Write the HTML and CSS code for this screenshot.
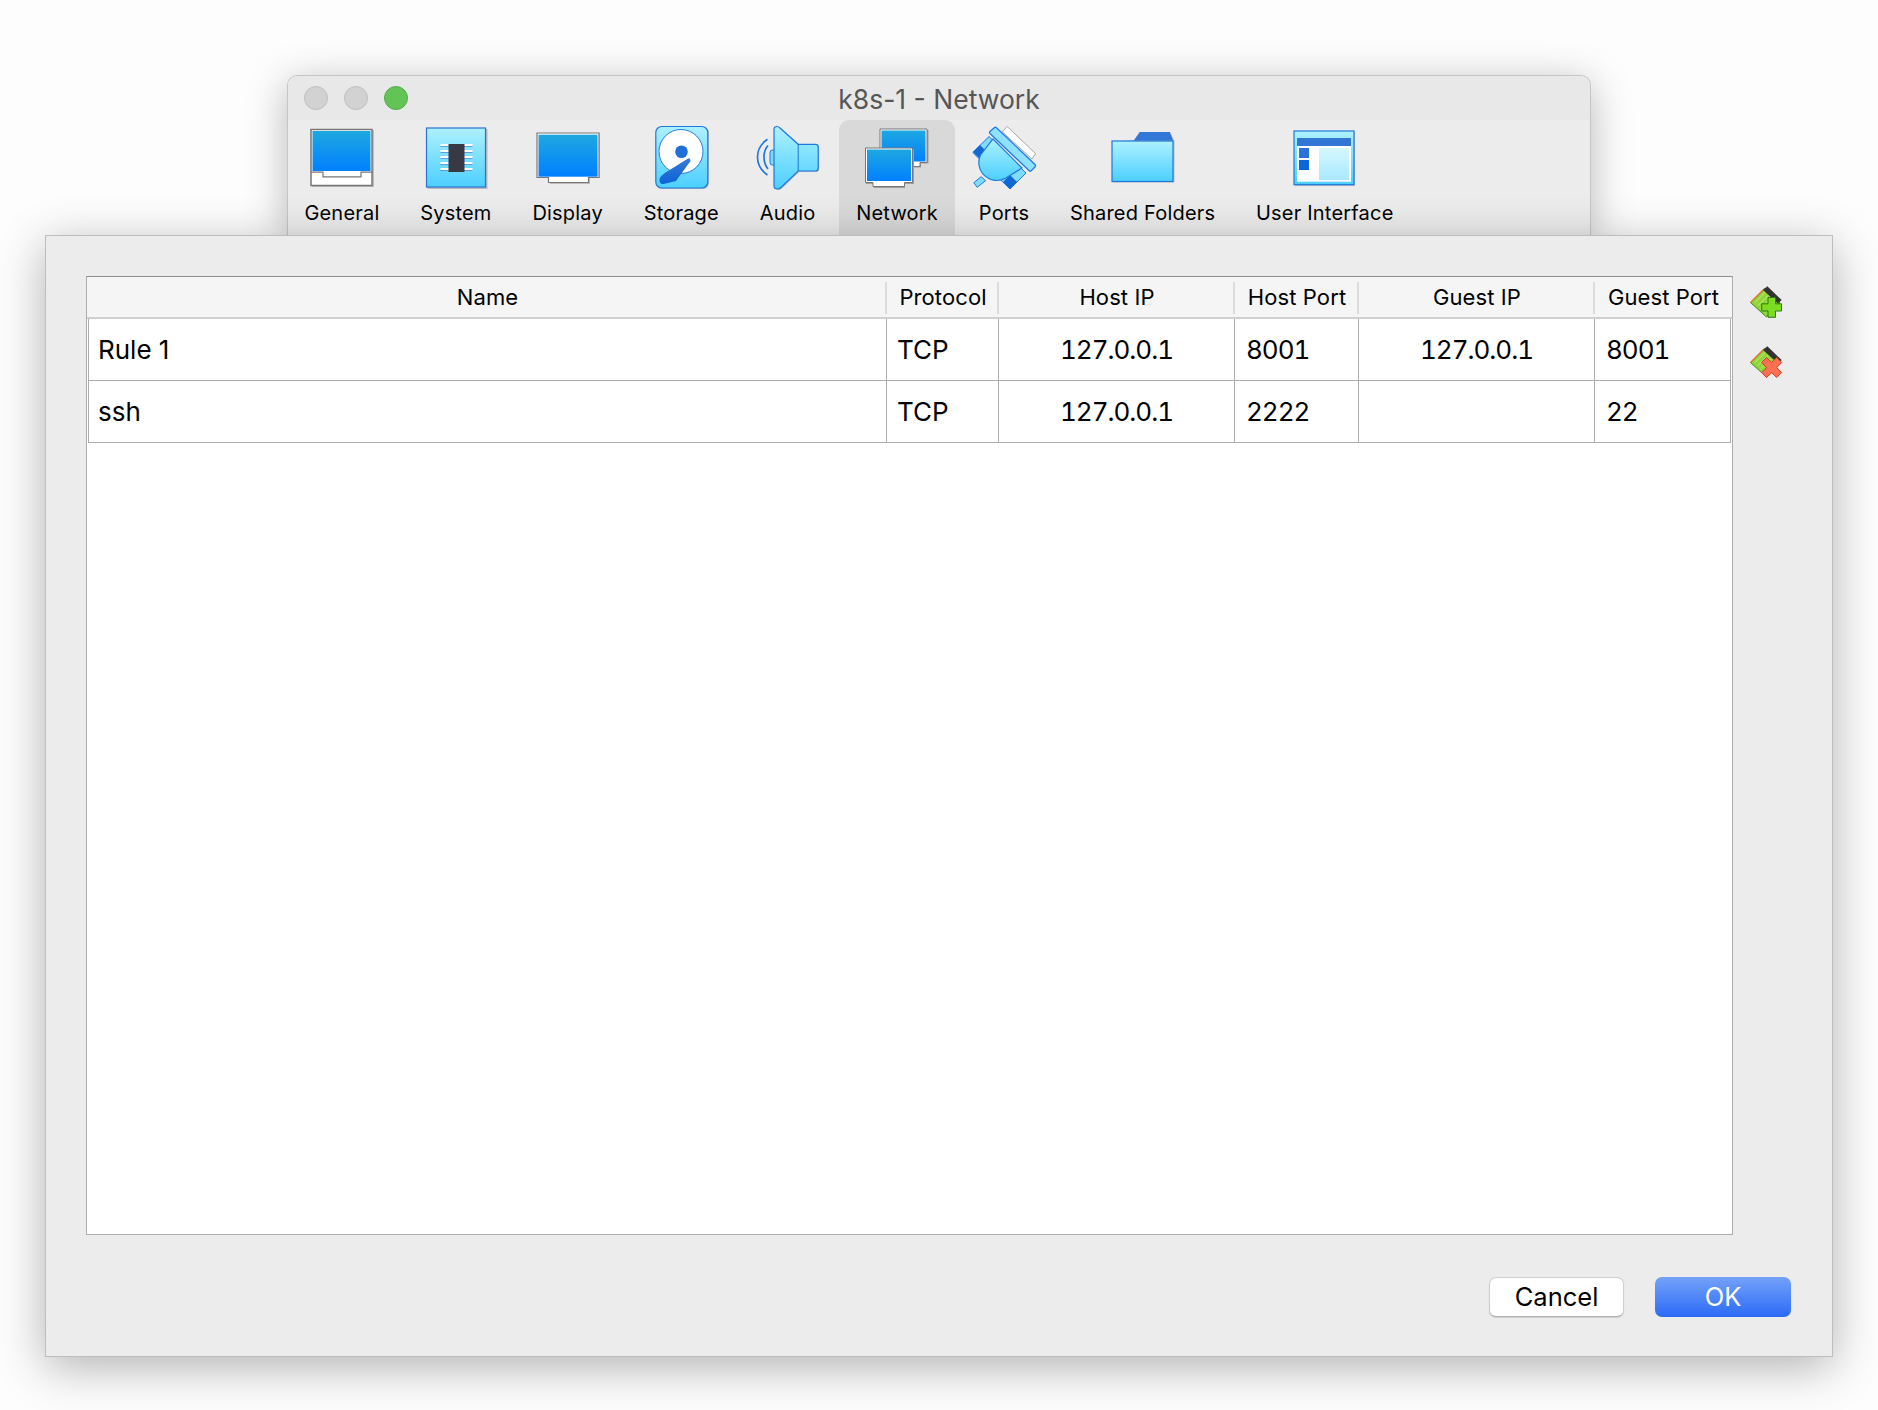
FILE: index.html
```html
<!doctype html>
<html>
<head>
<meta charset="utf-8">
<title>k8s-1 - Network</title>
<link rel="stylesheet" href="styles.css">
</head>
<body>
<svg class="defs" width="0" height="0">
	<defs>
		<linearGradient id="blue" x1="0" y1="0" x2="0" y2="1"><stop offset="0" stop-color="#1ea8e0"/><stop offset="1" stop-color="#0080ff"/></linearGradient>
		<linearGradient id="light" x1="0" y1="0" x2="0" y2="1"><stop offset="0" stop-color="#aef1ff"/><stop offset="1" stop-color="#4ccfff"/></linearGradient>
		<linearGradient id="pale" x1="0" y1="0" x2="0" y2="1"><stop offset="0" stop-color="#d6f7ff"/><stop offset="1" stop-color="#a8e9ff"/></linearGradient>
		<linearGradient id="dark" x1="0" y1="0" x2="0" y2="1"><stop offset="0" stop-color="#3a7bd6"/><stop offset="1" stop-color="#0a63d6"/></linearGradient>
	</defs>
</svg>
<div class="stage">
	<section class="window">
		<header class="titlebar">
			<span class="light"></span>
			<span class="light"></span>
			<span class="light light-green"></span>
			<h1 class="title">k8s-1 - Network</h1>
		</header>
		<nav class="tools">
			<a class="tool">
				<svg class="ico" viewBox="0 0 64 64">
					<rect x="2" y="4" width="62" height="57" fill="#bdbdbd"/>
					<rect x="1" y="3.5" width="61" height="56" fill="#fff" stroke="#777" stroke-width="1.5"/>
					<rect x="2.5" y="5" width="58" height="40" fill="url(#blue)"/>
					<path d="M1 46.2H13V50.8H51V46.2H62" fill="none" stroke="#777" stroke-width="1.2"/>
				</svg>
				General
			</a>
			<a class="tool">
				<svg class="ico" viewBox="0 0 64 64">
					<rect x="3.5" y="3" width="60" height="60" fill="#b9b9b9"/>
					<rect x="2.5" y="2" width="59" height="59" fill="url(#light)" stroke="#2a72da" stroke-width="1.2"/>
					<path d="M16.5 20.5h32M16.5 26.5h32M16.5 32.5h32M16.5 38.5h32M16.5 44.5h32" stroke="#5a9fdc" stroke-width="1"/>
					<path d="M16.5 19h32M16.5 25h32M16.5 31h32M16.5 37h32M16.5 43h32" stroke="#fff" stroke-width="2"/>
					<rect x="24.5" y="18" width="16" height="28" fill="#373a45"/>
				</svg>
				System
			</a>
			<a class="tool">
				<svg class="ico" viewBox="0 0 64 64">
					<path d="M2 8h62v44H54v6H14v-6H2z" fill="#bdbdbd"/>
					<path d="M1 7h62v44.5H52.500v5H12.500v-5H1z" fill="#fff" stroke="#777" stroke-width="1.2"/>
					<rect x="2.500" y="8.700" width="59" height="42" fill="url(#blue)"/>
				</svg>
				Display
			</a>
			<a class="tool">
				<svg class="ico" viewBox="0 0 64 64">
					<rect x="7.500" y="1" width="52.500" height="62" rx="6" fill="#bdbdbd"/>
					<rect x="6.800" y="0.500" width="52" height="61.500" rx="6" fill="url(#light)" stroke="#1f78dc" stroke-width="1.2"/>
					<circle cx="32" cy="25.500" r="22" fill="#fff" stroke="#2a7ade" stroke-width="1"/>
					<circle cx="32.500" cy="25.700" r="6.300" fill="#1f6fd8"/>
					<path d="M39 32.500Q41 31.500 41.500 34.500Q41.500 36 40 37L27 55L14.500 58Q11 58.500 10.500 54.500Q10.500 51 13.500 49L15.500 47.300z" fill="url(#dark)"/>
				</svg>
				Storage
			</a>
			<a class="tool">
				<svg class="ico" viewBox="0 0 64 64">
					<path d="M11.500 13.300Q1.500 20 1.500 31Q1.500 42 11.500 49M12 19.500Q8 24 8 31Q8 38 12 43" fill="none" stroke="#1f78dc" stroke-width="1.700"/>
					<rect x="14" y="24" width="6" height="15" rx="2.500" fill="#7fdcff" stroke="#1f78dc"/>
					<path d="M18 3Q18 .500 21 .500Q22.500 .500 24 2L42.200 18.300H59.500Q62.200 18.300 62.200 21V42Q62.200 45 59.500 45H42.200L25 61.500Q23.500 63 21.500 63Q18 63 18 60z" fill="#bdbdbd" transform="translate(1 1)"/>
					<path d="M18 3Q18 .500 21 .500Q22.500 .500 24 2L42.200 18.300H59.500Q62.200 18.300 62.200 21V42Q62.200 45 59.500 45H42.200L25 61.500Q23.500 63 21.500 63Q18 63 18 60z" fill="url(#light)" stroke="#1f78dc" stroke-width="1.200"/>
					<path d="M42.200 18.300V45" stroke="#1f78dc" stroke-width="1"/>
				</svg>
				Audio
			</a>
			<a class="tool tool-active">
				<svg class="ico" viewBox="0 0 64 64">
					<path d="M16 4h47.500v33.500H56v4H47V46H16z" fill="#9d9d9d"/>
					<path d="M15 3h47v33.500H55v4H46v5H15z" fill="#fff" stroke="#777" stroke-width="1"/>
					<rect x="16.500" y="4.500" width="44" height="31" fill="url(#blue)"/>
					<path d="M1 23h48v35h-9v4H9v-4H1z" fill="#9d9d9d"/>
					<path d="M.500 22h47v34.500H39.500v4H8v-4H.500z" fill="#fff" stroke="#777" stroke-width="1"/>
					<rect x="2" y="23.500" width="44" height="31.500" fill="url(#blue)"/>
				</svg>
				Network
			</a>
			<a class="tool">
				<svg class="ico" viewBox="0 0 64 64">
					<path d="M35.200 .500L63.500 27.500L60 33L30.200 5.700z" fill="#fff" stroke="#a8a8a8" stroke-width="1"/>
					<path d="M1.800 56.700L9.200 50.700L13.500 54.700L5.200 61.300z" fill="#7fdcff" stroke="#1f78dc"/>
					<path d="M.800 26.500L17 10.500L54 47L38 63z" fill="#7fdcff" stroke="#1f78dc"/>
					<path d="M1 26L8 19L15 26L8 33z" fill="#1168d4"/>
					<path d="M31 56L38 49L45 56L38 63z" fill="#1168d4"/>
					<path d="M21 13L50 42L33.500 52.300A18 18 0 0 1 8.500 29z" fill="url(#light)" stroke="#1f78dc" stroke-width="1.200"/>
					<path d="M18 5.500L22.500 1.500Q23.500 .800 24.500 1.700L63 38.500Q64 39.700 63 41L59 45Q58 45.500 57 44.500L18 7.500Q17 6.500 18 5.500z" fill="#8fe2ff" stroke="#1f78dc" stroke-width="1.200"/>
				</svg>
				Ports
			</a>
			<a class="tool">
				<svg class="ico" viewBox="0 0 64 64">
					<path d="M23 14L29 6H59L63.500 15V56.500H2V16z" fill="#bdbdbd"/>
					<path d="M22.800 14.500L28.800 6H58.800L62.200 14.500z" fill="#3377d6"/>
					<rect x="1" y="15" width="61" height="40.500" fill="url(#light)" stroke="#1f78dc" stroke-width="1.200"/>
				</svg>
				Shared Folders
			</a>
			<a class="tool">
				<svg class="ico" viewBox="0 0 64 64">
					<rect x="2" y="6" width="60" height="54" fill="#bdbdbd"/>
					<rect x="1" y="5" width="60" height="53.700" fill="url(#light)" stroke="#1f78dc" stroke-width="1.200"/>
					<rect x="4" y="20" width="54" height="35.700" fill="#fff"/>
					<rect x="4" y="12" width="54" height="8" fill="#3377d6"/>
					<rect x="6" y="22" width="10" height="10" fill="#2a72d8"/>
					<rect x="6" y="34" width="10" height="10" fill="#0b66d8"/>
					<rect x="26" y="22" width="30" height="32" fill="url(#pale)"/>
				</svg>
				User Interface
			</a>
		</nav>
	</section>
	<section class="sheet">
		<div class="main">
			<div class="table">
				<div class="row head">
					<div class="th">Name</div>
					<div class="th">Protocol</div>
					<div class="th">Host IP</div>
					<div class="th">Host Port</div>
					<div class="th">Guest IP</div>
					<div class="th">Guest Port</div>
				</div>
				<div class="row cells">
					<div class="td">Rule 1</div>
					<div class="td">TCP</div>
					<div class="td num td-c">127.0.0.1</div>
					<div class="td num">8001</div>
					<div class="td num td-c">127.0.0.1</div>
					<div class="td num">8001</div>
				</div>
				<div class="row cells">
					<div class="td">ssh</div>
					<div class="td">TCP</div>
					<div class="td num td-c">127.0.0.1</div>
					<div class="td num">2222</div>
					<div class="td td-c"></div>
					<div class="td num">22</div>
				</div>
			</div>
			<div class="side">
				<svg class="act" viewBox="0 0 32 32">
					<path d="M.500 16.500L15 2.300L30 17L16.500 31z" fill="#8fd63a" stroke="#3f8a1c" stroke-width="1"/>
					<path d="M.500 16.500L14 3" fill="none" stroke="#e0702a" stroke-width="1.200"/>
					<path d="M5 16.500L15 6.500M8 19.500L18 9.500M11 22.500L21 12.500" stroke="#c4ec7c" stroke-width="1"/>
					<path d="M13 4L17.300 .300L31.700 14L28 17.500z" fill="#333"/>
					<path d="M18 11.500h7.500v6.300h6v7.200h-6v6.300H18v-6.300h-6.300v-7.200H18z" fill="#7cdc22" stroke="#2a7a10" stroke-width="1"/>
				</svg>
				<svg class="act" viewBox="0 0 32 32">
					<path d="M.500 16.500L15 2.300L30 17L16.500 31z" fill="#8fd63a" stroke="#3f8a1c" stroke-width="1"/>
					<path d="M.500 16.500L14 3" fill="none" stroke="#e0702a" stroke-width="1.200"/>
					<path d="M5 16.500L15 6.500M8 19.500L18 9.500M11 22.500L21 12.500" stroke="#c4ec7c" stroke-width="1"/>
					<path d="M13 4L17.300 .300L31.700 14L28 17.500z" fill="#333"/>
					<path d="M16.500 11.500L21.700 16.500L26.700 11.500L31.700 16.500L26.700 21.700L31.700 26.500L26.700 31.500L21.700 26.700L16.500 31.500L11.700 26.500L16.700 21.700L11.700 16.500z" fill="#ff6f52" stroke="#c8401f" stroke-width="1"/>
				</svg>
			</div>
		</div>
		<div class="btns">
			<button class="btn">Cancel</button>
			<button class="btn btn-ok">OK</button>
		</div>
	</section>
</div>
</body>
</html>
```

FILE: styles.css
```css
html,body{margin:0;height:100%;}
body{background:#fdfdfd;font-family:Inter,"Liberation Sans",sans-serif;color:#000;overflow:hidden;}
.defs{display:block;}
.stage{padding:75px 45px 0;}

.window{position:relative;margin:0 242px;height:160px;background:#ececec;border:1px solid #c6c6c6;border-bottom:0;border-radius:10px 10px 0 0;box-sizing:border-box;box-shadow:0 8px 40px rgba(0,0,0,.28);}
.titlebar{display:flex;align-items:center;gap:16px;height:44px;padding:0 16px;background:#e8e8e8;border-radius:9px 9px 0 0;position:relative;}
.light{width:24px;height:24px;background:#d2d2d2;border:1px solid #bebebe;border-radius:50%;box-sizing:border-box;}
.light-green{background:#61c454;border-color:#53ad48;}
.title{position:absolute;left:0;right:0;top:0;margin:0;font-size:26.500px;font-weight:400;line-height:46px;text-align:center;color:#565656;}

.tools{display:flex;gap:6px;height:115px;margin-left:-1px;}
.tool{display:flex;flex-direction:column;align-items:center;padding:6px 17.4px 0;font-size:20px;letter-spacing:.2px;line-height:24px;white-space:nowrap;border-radius:10px 10px 0 0;}
.tool-active{background:#d9d9d9;}
.ico{display:block;width:64px;height:64px;margin:0 -15px 11px;overflow:visible;}

.sheet{position:relative;display:flex;flex-direction:column;height:1122px;padding:40px 41px 38px 40px;background:#ececec;border:1px solid #bdbdbd;box-sizing:border-box;box-shadow:0 10px 44px rgba(0,0,0,.3);}
.main{display:flex;gap:17px;height:959px;flex:none;}
.side{display:flex;flex-direction:column;gap:28px;padding-top:10px;}
.act{display:block;width:32px;height:32px;overflow:visible;}

.table{width:1647px;background:#fff;border:1px solid #adadad;border-top-color:#8e8e8e;box-sizing:border-box;}
.row{display:grid;grid-template-columns:797px 112px 236px 124px 236px 137px;}
.head{height:42px;background:#f5f5f5;border-bottom:2px solid #d0d0d0;box-sizing:border-box;grid-template-columns:799px 112px 236px 124px 236px 137px;}
.th{position:relative;padding-left:2px;font-size:22px;letter-spacing:.1px;line-height:40px;text-align:center;}
.th+.th:before{content:"";position:absolute;left:-1px;top:5px;width:2px;height:32px;background:#dcdcdc;}
.cells{height:62px;margin:0 1px;border:1px solid #adadad;border-top:0;box-sizing:border-box;font-size:26px;line-height:60px;}
.td{padding:1px 0 0 10px;border-left:1px solid #adadad;}
.td:first-child{padding-left:9px;border-left:0;}
.num{padding-left:11px;font-variant-numeric:tabular-nums;letter-spacing:-1px;}
.td-c{padding-left:0;text-align:center;}

.btns{display:flex;justify-content:flex-end;gap:31px;margin-top:42px;}
.btn{width:135px;height:40px;padding:0 0 2px;font:25.500px Inter,"Liberation Sans",sans-serif;color:#000;background:#fff;border:1px solid #cfcfcf;border-bottom-color:#b0b0b0;border-radius:7px;box-shadow:0 1px 1px rgba(0,0,0,.12);}
.btn-ok{width:136px;color:#fff;background:linear-gradient(#74a2f9,#2c6af6);border:0;box-shadow:none;}
```
